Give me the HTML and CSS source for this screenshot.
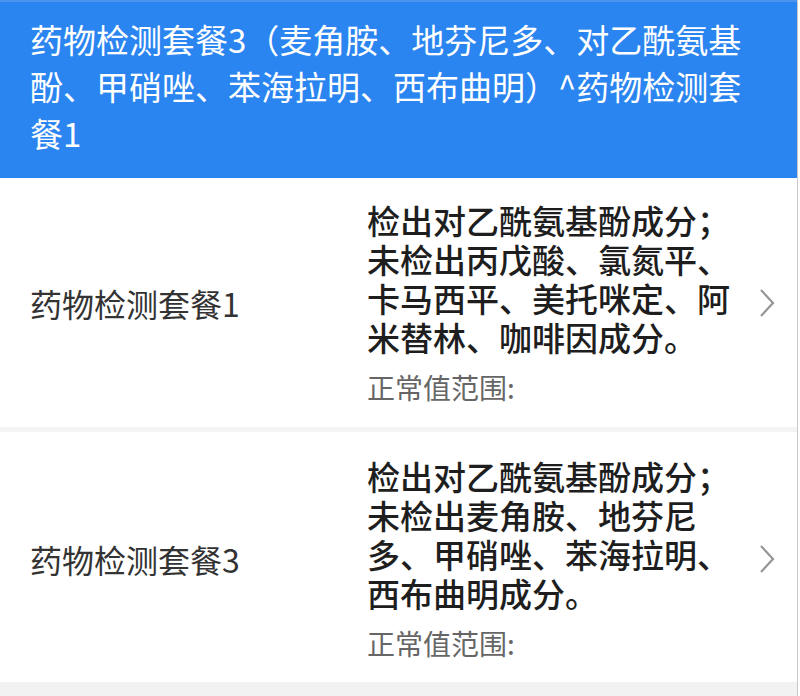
FILE: index.html
```html
<!DOCTYPE html>
<html lang="zh-CN">
<head>
<meta charset="utf-8">
<link rel="stylesheet" href="styles.css">
</head>
<body>
<div class="page">
  <header class="title">药物检测套餐3（麦角胺、地芬尼多、对乙酰氨基酚、甲硝唑、苯海拉明、西布曲明）^药物检测套餐1</header>
  <div class="row">
    <div class="label">药物检测套餐1</div>
    <div class="detail">
      <div class="result">检出对乙酰氨基酚成分；未检出丙戊酸、氯氮平、卡马西平、美托咪定、阿米替林、咖啡因成分。</div>
      <div class="range">正常值范围:</div>
    </div>
    <svg class="chev" width="16" height="30" viewBox="0 0 16 30"><path d="M2 2 L14 15 L2 28" fill="none" stroke="#959595" stroke-width="2.2"/></svg>
  </div>
  <div class="sep"></div>
  <div class="row row2">
    <div class="label">药物检测套餐3</div>
    <div class="detail">
      <div class="result">检出对乙酰氨基酚成分；未检出麦角胺、地芬尼多、甲硝唑、苯海拉明、西布曲明成分。</div>
      <div class="range">正常值范围:</div>
    </div>
    <svg class="chev" width="16" height="30" viewBox="0 0 16 30"><path d="M2 2 L14 15 L2 28" fill="none" stroke="#959595" stroke-width="2.2"/></svg>
  </div>
  <div class="foot"></div>
</div>
</body>
</html>
```
FILE: styles.css
```css
html, body {
  margin: 0;
  padding: 0;
  background: #ffffff;
}
body {
  font-family: "Noto Sans CJK SC", "Noto Sans", sans-serif;
  width: 800px;
  height: 696px;
  overflow: hidden;
}
.page {
  width: 797px;
  height: 696px;
  border-right: 1px solid #c9c9c9;
  display: flex;
  flex-direction: column;
}
.title {
  background: #2b85f1;
  color: #ffffff;
  font-size: 33px;
  line-height: 47px;
  padding: 14px 42px 21px 30px;
  border-top: 2px solid #4b94ee;
  margin: 0;
}
.row {
  display: flex;
  align-items: center;
  padding: 23px 22px 22px 30px;
  background: #ffffff;
}
.row2 {
  padding-top: 25px;
  padding-bottom: 21px;
}
.label {
  flex: 0 0 337px;
  font-size: 32px;
  color: #333333;
  line-height: 40px;
}
.detail {
  width: 370px;
}
.result {
  font-size: 33px;
  line-height: 39px;
  font-weight: 500;
  color: #1e1e1e;
}
.range {
  font-size: 28px;
  line-height: 36px;
  color: #666666;
  margin-top: 12px;
}
.chev {
  margin-left: auto;
  display: block;
}
.sep {
  height: 5px;
  background: #f4f4f4;
}
.foot {
  flex: 1;
  background: #f2f2f2;
}
```
